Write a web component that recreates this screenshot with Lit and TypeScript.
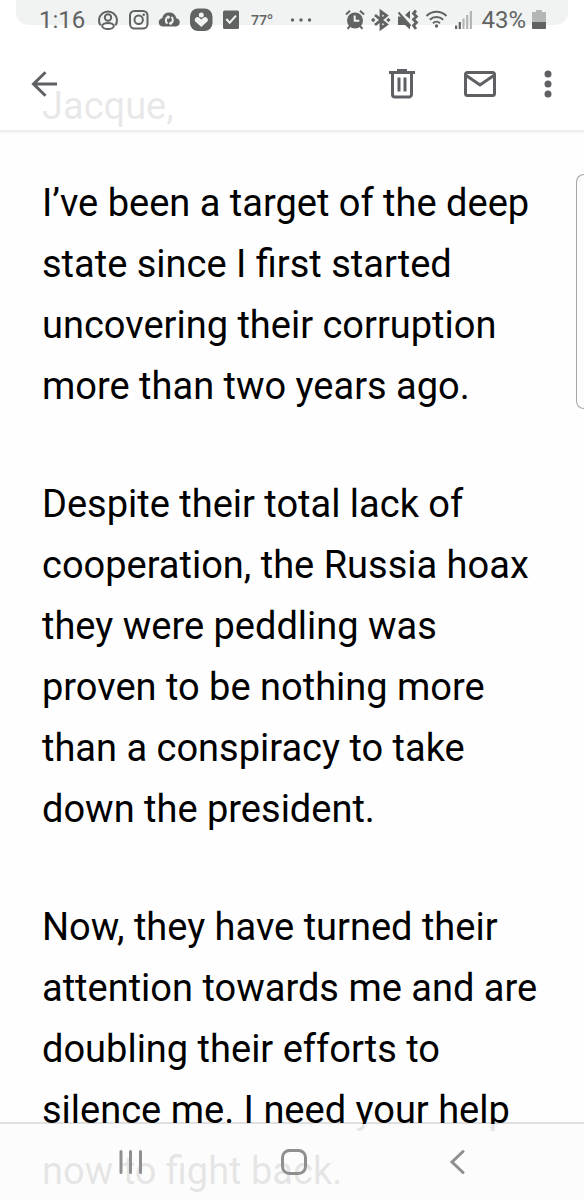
import { LitElement, html, css } from "lit";
import { customElement } from "lit/decorators.js";

@customElement("status-bar")
class StatusBar extends LitElement {
  static styles = css`
    :host {
      display: block;
      height: 40px;
      color: #616363;
    }
    .bar {
      display: flex;
      justify-content: space-between;
      align-items: center;
      height: 40px;
      padding: 0 38px 0 39px;
      box-sizing: border-box;
    }
    .plate {
      position: absolute;
      z-index: -1;
      top: 0;
      left: 16px;
      right: 16px;
      height: 25px;
      border-radius: 0 0 13px 13px;
      background: #f1f3f2;
    }
    .group {
      display: flex;
      align-items: center;
      gap: 9px;
    }
    .group.right {
      gap: 6px;
    }
    svg {
      display: block;
      flex: none;
      height: 24px;
      fill: currentColor;
    }
    .line {
      fill: none;
      stroke: currentColor;
      stroke-width: 2;
    }
    .bold {
      stroke-width: 2.8;
    }
    .cut {
      fill: #f1f3f2;
    }
    .cutline {
      fill: none;
      stroke: #f1f3f2;
      stroke-width: 2;
    }
    .faint {
      fill: #b4b6b5;
    }
    .clock {
      font-size: 24px;
      line-height: 24px;
      width: 49px;
    }
    .temp {
      font: 600 14px/24px "Open Sans", sans-serif;
      width: 28px;
      text-align: center;
    }
    .percent {
      font-size: 24px;
      line-height: 24px;
    }
  `;

  render() {
    return html`
      <div class="plate"></div>
      <div class="bar">
        <div class="group">
          <span class="clock">1:16</span>
          <svg width="22" viewBox="0 0 22 24">
            <path class="line" d="M3.6 17.5A9 9 0 1 1 18.4 17.5" />
            <circle class="line" cx="11" cy="9.5" r="3.2" />
            <ellipse class="line" cx="11" cy="18" rx="5.8" ry="3" />
          </svg>
          <svg width="21" viewBox="0 0 21 24">
            <rect class="line" x="2" y="3" width="17.5" height="17.5" rx="4.5" />
            <circle class="line" cx="10.7" cy="11.8" r="4.2" />
            <circle cx="15.7" cy="6.8" r="1.3" />
          </svg>
          <svg width="23" viewBox="0 0 23 24">
            <path d="M4.500 18.500a4.200 4.200 0 0 1-.3-8.300A7.200 7.200 0 0 1 18.300 10.200 4.200 4.200 0 0 1 18 18.500z" />
            <path class="cutline" d="M10 8.700A4 4 0 0 0 9.500 15.500M12.500 15.700A4 4 0 0 0 13.500 9" />
            <path class="cut" d="M9.600 7l2.800 2-2.600 2.400zM13.400 17.400l-2.800-2 2.600-2.400z" />
          </svg>
          <svg width="23" viewBox="0 0 23 24">
            <rect x="0" y="0.500" width="22.500" height="22.500" rx="8" />
            <circle class="cut" cx="11.300" cy="7" r="2.500" />
            <path class="cut" d="M11.300 19L4.800 13a3 3 0 0 1 4.200-3.600l2.300 2.200 2.300-2.200A3 3 0 0 1 17.800 13z" />
          </svg>
          <svg width="17" viewBox="0 0 17 24">
            <rect x="1" y="2.500" width="16" height="18.500" rx="1.500" />
            <path class="cutline" d="M4.300 11l3.400 3.700 6.300-7" />
          </svg>
          <span class="temp">77°</span>
          <svg width="32" viewBox="0 0 32 24">
            <circle cx="7.500" cy="12" r="1.700" />
            <circle cx="16" cy="12" r="1.700" />
            <circle cx="24.500" cy="12" r="1.700" />
          </svg>
        </div>
        <div class="group right">
          <svg width="20" viewBox="0 0 20 24">
            <circle cx="10" cy="12.500" r="8" />
            <path class="line" d="M1 6.500L5 2.800M19 6.500L15 2.800M5 18L2.500 20.800M15 18l2.500 2.800" />
            <path class="cutline" d="M9.700 7.500v5.300h4.600" />
          </svg>
          <svg width="20" viewBox="0 0 20 24">
            <path class="line bold" d="M4 7l11.500 9.500L10 20.500V3.500l5.500 4L4 17" />
            <path d="M0 12l2.200-2.200L4.400 12l-2.200 2.200zM15.200 12l2.200-2.200 2.200 2.200-2.200 2.200z" />
          </svg>
          <svg width="22" viewBox="0 0 22 24">
            <path d="M1 8.500h3l9 9V21.500l-5-4.500H1zM8 7l5-4.500V11z" />
            <path class="line" d="M1.500 4.500L13.500 18" />
            <path class="line bold" d="M19 2.500l-2.500 3 3 3-3 3 3 3-3 3 2.500 3.500" />
          </svg>
          <svg width="24" viewBox="0 0 24 24">
            <path class="line" d="M1.500 8a14 14 0 0 1 20 0M4.800 11.800a9.500 9.500 0 0 1 13.400 0M8 15.200a5 5 0 0 1 7 0" />
            <circle cx="11.500" cy="18" r="1.700" />
          </svg>
          <svg width="20" viewBox="0 0 20 24">
            <path d="M0 17.500h2.200V21H0zM3.700 14h2.200v7H3.700z" />
            <path class="faint" d="M7.400 10.500h2.200V21H7.400zM11.100 7h2.200v14h-2.200zM14.800 3H17v18h-2.200z" />
          </svg>
          <span class="percent">43%</span>
          <svg width="14" viewBox="0 0 14 24">
            <path class="faint" d="M4 2h6v2h3a1 1 0 0 1 1 1v9H0V5a1 1 0 0 1 1-1h3z" />
            <path d="M0 14h14v6a1 1 0 0 1-1 1H1a1 1 0 0 1-1-1z" />
          </svg>
        </div>
      </div>
    `;
  }
}

@customElement("mail-toolbar")
class MailToolbar extends LitElement {
  static styles = css`
    :host {
      display: flex;
      align-items: center;
      height: 88px;
      padding: 0 7px 2px 20px;
      color: #5f6064;
    }
    button {
      display: grid;
      place-items: center;
      width: 78px;
      height: 48px;
      padding: 0;
      border: 0;
      background: none;
      color: inherit;
    }
    .back {
      width: 48px;
      margin-right: auto;
    }
    .more {
      width: 58px;
    }
    svg {
      display: block;
      fill: none;
      stroke: currentColor;
      stroke-width: 3;
    }
    .solid {
      fill: currentColor;
      stroke: none;
    }
  `;

  render() {
    return html`
      <button class="back" aria-label="Back">
        <svg width="26" height="26" viewBox="0 0 26 26">
          <path d="M26 13H3M14.500 1.300L2.500 13l12 11.700" />
        </svg>
      </button>
      <button aria-label="Delete">
        <svg width="28" height="32" viewBox="0 0 28 32">
          <path d="M4.500 4v22.500a2.500 2.500 0 0 0 2.500 2.500h14a2.500 2.500 0 0 0 2.500-2.500V4" />
          <path d="M1 4.500h26M9 2.500h10M11 9.500v14M17 9.500v14" />
        </svg>
      </button>
      <button aria-label="Mark as unread">
        <svg width="34" height="28" viewBox="0 0 34 28">
          <rect x="2.500" y="2.500" width="29" height="23" rx="2" />
          <path d="M2.500 5L17 15 31.500 5" />
        </svg>
      </button>
      <button class="more" aria-label="More options">
        <svg width="8" height="28" viewBox="0 0 8 28">
          <circle class="solid" cx="4" cy="4" r="3.500" />
          <circle class="solid" cx="4" cy="14" r="3.500" />
          <circle class="solid" cx="4" cy="24" r="3.500" />
        </svg>
      </button>
    `;
  }
}

@customElement("system-nav")
class SystemNav extends LitElement {
  static styles = css`
    :host {
      display: grid;
      grid-template-columns: repeat(3, 1fr);
      height: 76px;
      padding: 0 46px 0 50px;
      border-top: 2px solid rgba(0, 0, 0, 0.12);
      background: rgba(252, 252, 252, 0.91);
      background-clip: padding-box;
      color: #8f8f8f;
    }
    button {
      display: grid;
      place-items: center;
      padding: 0;
      border: 0;
      background: none;
      color: inherit;
    }
    svg {
      display: block;
      fill: none;
      stroke: currentColor;
      stroke-width: 3;
      stroke-linecap: round;
    }
  `;

  render() {
    return html`
      <button aria-label="Recents">
        <svg width="26" height="26" viewBox="0 0 26 26">
          <path d="M3 2.500v21M12.500 2.500v21M22.500 2.500v21" />
        </svg>
      </button>
      <button aria-label="Home">
        <svg width="28" height="28" viewBox="0 0 28 28">
          <rect x="2.500" y="2.500" width="23" height="23" rx="7" />
        </svg>
      </button>
      <button aria-label="Back">
        <svg width="16" height="26" viewBox="0 0 16 26">
          <path d="M14 2.500L3 13l11 10.500" />
        </svg>
      </button>
    `;
  }
}

@customElement("app-root")
class AppRoot extends LitElement {
  static styles = css`
    :host {
      display: block;
      position: relative;
      height: 100vh;
      overflow: hidden;
      background: #fefefe;
      color: #000;
      font-family: Roboto, sans-serif;
    }
    .top {
      position: absolute;
      z-index: 1;
      top: 0;
      left: 0;
      right: 0;
      background: rgba(255, 255, 255, 0.91);
      border-bottom: 2px solid #eeeef2;
      box-shadow: 0 1px 2px rgba(60, 60, 80, 0.06);
    }
    .bottom {
      position: absolute;
      bottom: 0;
      left: 0;
      right: 0;
    }
    .message {
      padding: 76px 44px 0 42px;
      font-size: 38px;
      line-height: 61px;
    }
    p {
      margin: 0 0 57px;
    }
    .greeting {
      margin-bottom: 36px;
    }
    .handle {
      position: absolute;
      top: 174px;
      right: 0;
      width: 7px;
      height: 233px;
      border: 1px solid #a6a6a6;
      border-right: 0;
      border-radius: 9px 0 0 9px;
      background: #fcfcfc;
    }
  `;

  render() {
    return html`
      <header class="top">
        <status-bar></status-bar>
        <mail-toolbar></mail-toolbar>
      </header>
      <main class="message">
        <p class="greeting">Jacque,</p>
        <p>
          I’ve been a target of the deep state since I first started uncovering
          their corruption more than two years ago.
        </p>
        <p>
          Despite their total lack of cooperation, the Russia hoax they were
          peddling was proven to be nothing more than a conspiracy to take down
          the president.
        </p>
        <p>
          Now, they have turned their attention towards me and are doubling
          their efforts to silence me. I need your help now to fight back.
        </p>
      </main>
      <div class="handle"></div>
      <system-nav class="bottom"></system-nav>
    `;
  }
}
